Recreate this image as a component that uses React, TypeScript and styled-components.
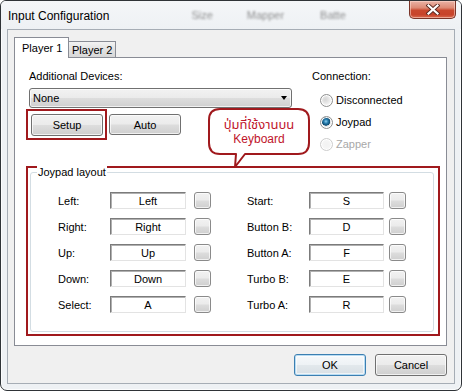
import React from "react";
import styled, { createGlobalStyle, css } from "styled-components";

const GlobalStyle = createGlobalStyle`
  html, body { margin: 0; padding: 0; background: #ffffff; }
  body {
    font-family: "Liberation Sans", Arial, sans-serif;
    font-size: 11px;
    color: #000;
  }
  * { box-sizing: border-box; }
`;

const Window = styled.div`
  width: 462px;
  height: 391px;
  border: 1px solid #2f3337;
  border-radius: 6px 6px 7px 7px;
  background: #eef1f4;
  display: flex;
  flex-direction: column;
  overflow: hidden;
  box-shadow: inset 0 0 0 1px #fbfcfd;
`;

const TitleBar = styled.div`
  height: 28px;
  flex: none;
  display: flex;
  align-items: center;
  padding-left: 7px;
  background: linear-gradient(#f4f6f8, #eef1f4);
`;

const TitleText = styled.div`
  font-size: 12px;
  line-height: 14px;
  margin-top: 1px;
  color: #000;
`;

const Ghost = styled.div<{ $ml: number }>`
  margin-left: ${(p) => p.$ml}px;
  font-size: 11px;
  color: #6d6d6d;
  filter: blur(1.3px);
  opacity: 0.75;
`;

const CloseButton = styled.div`
  margin-left: auto;
  margin-right: 5px;
  align-self: flex-start;
  width: 47px;
  height: 18px;
  border: 1px solid #7a3428;
  border-top: none;
  border-radius: 0 0 5px 5px;
  background: linear-gradient(#eab3a6 0%, #dd8a75 40%, #c9472d 55%, #c7432a 80%, #d86a4e 100%);
  box-shadow: inset 0 0 0 1px rgba(255, 220, 210, 0.55);
  display: flex;
  align-items: center;
  justify-content: center;
`;

const Client = styled.div`
  flex: 1;
  margin: 0 6px 6px;
  border: 1px solid #a6adb5;
  background: #f0f0f0;
  padding: 7px 7px 0 6px;
  display: flex;
  flex-direction: column;
`;

const TabStrip = styled.div`
  height: 20px;
  display: flex;
  align-items: flex-end;
`;

const Tab = styled.div<{ $active?: boolean }>`
  border: 1px solid #898c95;
  border-bottom: none;
  font-size: 11px;
  line-height: 14px;
  white-space: nowrap;
  ${(p) =>
    p.$active
      ? css`
          width: 55px;
          height: 21px;
          margin-bottom: -1px;
          background: #ffffff;
          padding: 3px 0 0 7px;
          position: relative;
          z-index: 1;
        `
      : css`
          width: 47px;
          height: 16px;
          border-left: none;
          background: linear-gradient(#f3f3f3, #e2e2e2 50%, #d8d8d8);
          padding: 1px 0 0 3px;
        `}
`;

const Pane = styled.div`
  height: 289px;
  border: 1px solid #898c95;
  background: #ffffff;
  padding: 12px 6px 0 11px;
  display: flex;
  flex-direction: column;
  position: relative;
`;

const TopSection = styled.div`
  display: flex;
  align-items: flex-start;
`;

const LeftCol = styled.div`
  width: 266px;
  display: flex;
  flex-direction: column;
`;

const RightCol = styled.div`
  margin-left: 20px;
  display: flex;
  flex-direction: column;
`;

const Caption = styled.div<{ $indent?: number }>`
  height: 13px;
  line-height: 13px;
  padding-left: ${(p) => p.$indent ?? 0}px;
`;

const buttonFace = css`
  border: 1px solid #707070;
  border-radius: 3px;
  background: linear-gradient(#f2f2f2 0%, #ebebeb 48%, #dddddd 52%, #cfcfcf 100%);
  box-shadow: inset 0 0 0 1px rgba(255, 255, 255, 0.7);
`;

const Combo = styled.div`
  ${buttonFace};
  margin: 5px 0 0 3px;
  width: 263px;
  height: 20px;
  display: flex;
  align-items: center;
  padding: 0 0 0 3px;
  line-height: 13px;
`;

const ComboArrow = styled.div`
  margin-left: auto;
  margin-right: 4px;
  width: 0;
  height: 0;
  border-left: 3.5px solid transparent;
  border-right: 3.5px solid transparent;
  border-top: 4px solid #000;
`;

const ButtonRow = styled.div`
  margin-top: 1px;
  display: flex;
  align-items: center;
`;

const Highlight = styled.div`
  border: 2px solid #a0191d;
  padding: 3px 2px 2px 3px;
`;

const PushButton = styled.div<{ $w: number; $default?: boolean }>`
  ${buttonFace};
  width: ${(p) => p.$w}px;
  height: 22px;
  display: flex;
  align-items: center;
  justify-content: center;
  font-size: 11px;
  ${(p) =>
    p.$default &&
    css`
      border-color: #3c7fb1;
      background: linear-gradient(#f6f9fb 0%, #eef2f5 48%, #e2e8ec 52%, #d8dfe4 100%);
      box-shadow: inset 0 0 0 1px #b8dcf3, inset 0 0 0 2px rgba(255, 255, 255, 0.6);
    `}
`;

const SideButton = styled(PushButton)`
  margin-left: 2px;
  height: 21px;
`;

const RadioList = styled.div`
  margin-top: 6px;
  display: flex;
  flex-direction: column;
`;

const RadioRow = styled.div<{ $disabled?: boolean }>`
  height: 22px;
  display: flex;
  align-items: center;
  padding-left: 8px;
  font-size: 11px;
  color: ${(p) => (p.$disabled ? "#a8a8a8" : "#000")};
`;

const RadioDot = styled.span<{ $checked?: boolean; $disabled?: boolean }>`
  width: 13px;
  height: 13px;
  border-radius: 50%;
  margin-right: 3px;
  border: 1px solid ${(p) => (p.$disabled ? "#cdcdcd" : "#8e8f8f")};
  background: ${(p) =>
    p.$checked
      ? "radial-gradient(circle at 45% 40%, #8fd0ee 0px, #2a7fb0 2px, #0d4a70 4px, #d9dde0 4.5px, #f3f3f3 6px)"
      : p.$disabled
      ? "radial-gradient(circle, #f2f2f2 0px, #f7f7f7 6px)"
      : "radial-gradient(circle at 40% 40%, #d6d6d6 0px, #e4e4e4 3px, #f6f6f6 6px)"};
  box-shadow: inset 0 0 0 1px #ffffff;
  flex: none;
`;

const RedBox = styled.div`
  margin-top: 11px;
  width: 414px;
  height: 170px;
  border: 2px solid #a0191d;
  padding: 4px 4px 2px 2px;
  display: flex;
  flex-direction: column;
`;

const Group = styled.div`
  flex: 1;
  border: 1px solid #d3dde3;
  border-radius: 3px;
  position: relative;
  padding: 19px 0 0 27px;
  display: flex;
`;

const GroupLegend = styled.span`
  position: absolute;
  top: -7px;
  left: 6px;
  padding: 0 1px;
  background: #ffffff;
  line-height: 13px;
`;

const KeyGrid = styled.div<{ $labelW: number; $gap: number; $ml: number; $boxW: number }>`
  margin-left: ${(p) => p.$ml}px;
  display: grid;
  grid-template-columns: ${(p) => `${p.$labelW}px ${p.$boxW}px ${p.$gap}px 17px`};
  grid-auto-rows: 17px;
  row-gap: 9px;
  align-items: center;
`;

const KeyLabel = styled.div`
  font-size: 11px;
  line-height: 14px;
`;

const KeyBox = styled.div`
  height: 17px;
  border: 1px solid;
  border-color: #7b7b7b #e3e3e3 #e3e3e3 #7b7b7b;
  box-shadow: inset 1px 1px 0 #b0b0b0;
  background: #fff;
  display: flex;
  align-items: center;
  justify-content: center;
  font-size: 11px;
`;

const KeyButton = styled.div`
  ${buttonFace};
  grid-column: 4;
  width: 17px;
  height: 17px;
  border-color: #8a8a8a;
`;

const Footer = styled.div`
  margin-top: 8px;
  display: flex;
  justify-content: flex-end;
  gap: 9px;
`;

const Callout = styled.div`
  position: absolute;
  left: 193px;
  top: 50px;
  width: 104px;
  height: 62px;
`;

const CalloutText = styled.div`
  position: absolute;
  left: 0;
  top: 1px;
  width: 102px;
  display: flex;
  flex-direction: column;
  align-items: center;
  color: #c0142b;
  font-size: 12px;
  line-height: 15px;
  font-family: "Liberation Sans", "Noto Sans Thai", "Noto Sans", "DejaVu Sans", sans-serif;
  padding-top: 8px;
`;

const ThaiLine = styled.span`
  font-size: 13px;
  line-height: 15px;
`;

const leftKeys: [string, string][] = [
  ["Left:", "Left"],
  ["Right:", "Right"],
  ["Up:", "Up"],
  ["Down:", "Down"],
  ["Select:", "A"],
];

const rightKeys: [string, string][] = [
  ["Start:", "S"],
  ["Button B:", "D"],
  ["Button A:", "F"],
  ["Turbo B:", "E"],
  ["Turbo A:", "R"],
];

function KeyColumn(props: {
  keys: [string, string][];
  labelW: number;
  boxW: number;
  gap: number;
  ml: number;
}) {
  return (
    <KeyGrid $labelW={props.labelW} $boxW={props.boxW} $gap={props.gap} $ml={props.ml}>
      {props.keys.map(([label, value]) => (
        <React.Fragment key={label}>
          <KeyLabel>{label}</KeyLabel>
          <KeyBox>{value}</KeyBox>
          <KeyButton />
        </React.Fragment>
      ))}
    </KeyGrid>
  );
}

export default function App() {
  return (
    <>
      <GlobalStyle />
      <Window>
        <TitleBar>
          <TitleText>Input Configuration</TitleText>
          <Ghost $ml={82}>Size</Ghost>
          <Ghost $ml={34}>Mapper</Ghost>
          <Ghost $ml={36}>Batte</Ghost>
          <CloseButton>
            <svg width="14" height="11" viewBox="0 0 14 11">
              <path d="M2.5 1.5 L11.5 9.5 M11.5 1.5 L2.5 9.5" stroke="#5a2a22" strokeWidth="4" strokeLinecap="square" />
              <path d="M2.5 1.5 L11.5 9.5 M11.5 1.5 L2.5 9.5" stroke="#ffffff" strokeWidth="2.2" strokeLinecap="square" />
            </svg>
          </CloseButton>
        </TitleBar>
        <Client>
          <TabStrip>
            <Tab $active>Player 1</Tab>
            <Tab>Player 2</Tab>
          </TabStrip>
          <Pane>
            <TopSection>
              <LeftCol>
                <Caption $indent={3}>Additional Devices:</Caption>
                <Combo>
                  None
                  <ComboArrow />
                </Combo>
                <ButtonRow>
                  <Highlight>
                    <PushButton $w={72}>Setup</PushButton>
                  </Highlight>
                  <SideButton $w={72}>Auto</SideButton>
                </ButtonRow>
              </LeftCol>
              <RightCol>
                <Caption>Connection:</Caption>
                <RadioList>
                  <RadioRow>
                    <RadioDot />
                    Disconnected
                  </RadioRow>
                  <RadioRow>
                    <RadioDot $checked />
                    Joypad
                  </RadioRow>
                  <RadioRow $disabled>
                    <RadioDot $disabled />
                    Zapper
                  </RadioRow>
                </RadioList>
              </RightCol>
            </TopSection>
            <RedBox>
              <Group>
                <GroupLegend>Joypad layout</GroupLegend>
                <KeyColumn keys={leftKeys} labelW={52} boxW={76} gap={8} ml={0} />
                <KeyColumn keys={rightKeys} labelW={62} boxW={75} gap={5} ml={36} />
              </Group>
            </RedBox>
            <Callout>
              <svg width="104" height="62" viewBox="0 0 104 62">
                <path
                  d="M12 1 H90 Q101 1 101 12 V35 Q101 46 90 46 H37 L27 59 L28 46 H12 Q1 46 1 35 V12 Q1 1 12 1 Z"
                  fill="#ffffff"
                  stroke="#a0191d"
                  strokeWidth="2"
                  strokeLinejoin="round"
                />
              </svg>
              <CalloutText>
                <ThaiLine>ปุ่มที่ใช้งานบน</ThaiLine>
                <span>Keyboard</span>
              </CalloutText>
            </Callout>
          </Pane>
          <Footer>
            <PushButton $w={72} $default>
              OK
            </PushButton>
            <PushButton $w={72}>Cancel</PushButton>
          </Footer>
        </Client>
      </Window>
    </>
  );
}
